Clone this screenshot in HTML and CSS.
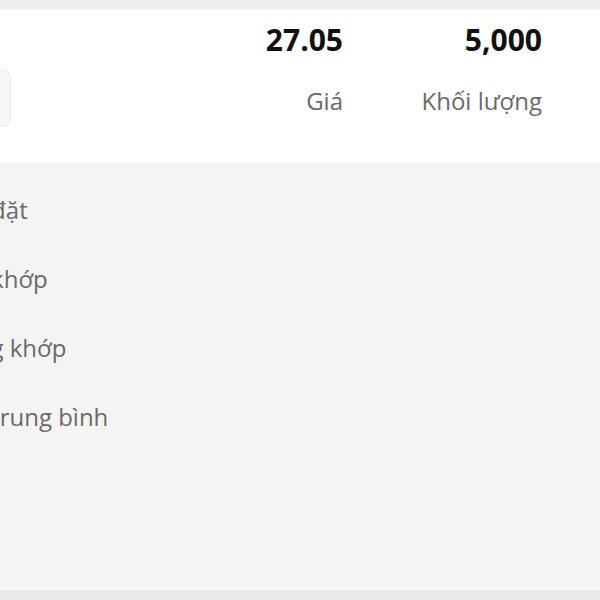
FILE: index.html
```html
<!DOCTYPE html>
<html lang="vi">
<head>
    <meta charset="UTF-8">
    <meta name="viewport" content="width=device-width, initial-scale=1.0">
    <link rel="stylesheet" href="styles.css">
    <title>Chi tiết lệnh</title>
</head>
<body>
    <div class="topbar"></div>
    <!-- tóm tắt lệnh -->
    <div class="summary">
        <div class="picker"></div>
        <div class="cols">
            <div class="col">
                <p class="num">27.05</p>
                <p class="label">Giá</p>
            </div>
            <div class="col">
                <p class="num">5,000</p>
                <p class="label">Khối lượng</p>
            </div>
        </div>
    </div>
    <!-- chi tiết -->
    <div class="details">
        <p class="row">Giá đặt</p>
        <p class="row">Giá khớp</p>
        <p class="row">Tổng khớp</p>
        <p class="row">Giá trung bình</p>
    </div>
    <div class="footer"></div>
</body>
</html>
```

FILE: styles.css
```css
body{
    margin: 0;
    font-family: 'Open Sans', 'Noto Sans', sans-serif;
    background-color: #f4f4f4;
    overflow: hidden;
}
p{
    margin: 0;
}
.topbar{
    height: 9px;
    background-color: #efefef;
    border-bottom: 1px solid #f6f6f6;
}
.summary{
    height: 153px;
    background-color: #ffffff;
    display: flex;
    align-items: flex-start;
}
.picker{
    width: 10px;
    height: 55px;
    margin-top: 60px;
    background-color: #f8f8f8;
    border: 1px solid #ececec;
    border-left: none;
    border-radius: 0 8px 8px 0;
}
.cols{
    margin-left: auto;
    padding-right: 58px;
    display: flex;
}
.col{
    width: 199px;
    text-align: right;
}
.num{
    margin-top: 12px;
    font-size: 30px;
    line-height: 36px;
    font-weight: 700;
    color: #111;
}
.label{
    margin-top: 28px;
    font-size: 24px;
    line-height: 30px;
    color: #6a6a6a;
}
.details{
    height: 414px;
    padding-top: 12px;
    margin-left: -52px;
}
.row{
    font-size: 24px;
    line-height: 69px;
    color: #6a6a6a;
    white-space: nowrap;
}
.footer{
    height: 11px;
    background-color: #e9e9e9;
    border-top: 1px solid #fafafa;
}
```
